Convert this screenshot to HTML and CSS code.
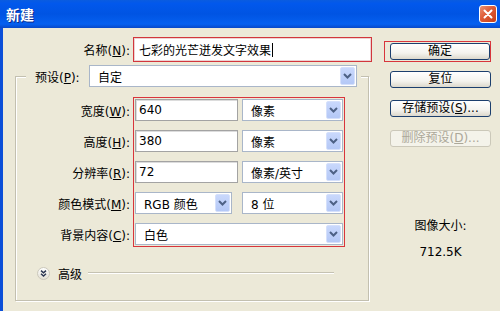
FILE: index.html
```html
<!DOCTYPE html>
<html lang="zh-CN">
<head>
<meta charset="utf-8">
<title>新建</title>
<link rel="stylesheet" href="styles.css">
</head>
<body>
<div class="window">
  <div class="titlebar">
    <span class="title">新建</span>
    <span class="close"><svg width="10" height="10" viewBox="0 0 10 10"><path d="M1.5 1.5 L8.5 8.5 M8.5 1.5 L1.5 8.5" stroke="#fff" stroke-width="2" stroke-linecap="round"/></svg></span>
  </div>
  <div class="client">
    <div class="main">
      <div class="name-row">
        <span class="lbl name-lbl">名称(<u>N</u>):</span>
        <div class="name-frame">七彩的光芒迸发文字效果<span class="caret"></span></div>
      </div>
      <fieldset class="group">
        <legend class="preset">
          <span class="preset-lbl">预设(<u>P</u>):</span>
          <div class="combo preset-combo"><span class="combo-text">自定</span><span class="drop"><svg width="9" height="6" viewBox="0 0 9 6"><path d="M1 1 L4.5 4.5 L8 1" fill="none" stroke="#4d6185" stroke-width="2"/></svg></span></div>
        </legend>
        <div class="params">
          <div class="labels">
            <span>宽度(<u>W</u>):</span>
            <span>高度(<u>H</u>):</span>
            <span>分辨率(<u>R</u>):</span>
            <span>颜色模式(<u>M</u>):</span>
            <span>背景内容(<u>C</u>):</span>
          </div>
          <div class="fields">
            <div class="textbox">640</div>
            <div class="combo"><span class="combo-text">像素</span><span class="drop"><svg width="9" height="6" viewBox="0 0 9 6"><path d="M1 1 L4.5 4.5 L8 1" fill="none" stroke="#4d6185" stroke-width="2"/></svg></span></div>
            <div class="textbox">380</div>
            <div class="combo"><span class="combo-text">像素</span><span class="drop"><svg width="9" height="6" viewBox="0 0 9 6"><path d="M1 1 L4.5 4.5 L8 1" fill="none" stroke="#4d6185" stroke-width="2"/></svg></span></div>
            <div class="textbox">72</div>
            <div class="combo"><span class="combo-text">像素/英寸</span><span class="drop"><svg width="9" height="6" viewBox="0 0 9 6"><path d="M1 1 L4.5 4.5 L8 1" fill="none" stroke="#4d6185" stroke-width="2"/></svg></span></div>
            <div class="combo narrow"><span class="combo-text">RGB 颜色</span><span class="drop"><svg width="9" height="6" viewBox="0 0 9 6"><path d="M1 1 L4.5 4.5 L8 1" fill="none" stroke="#4d6185" stroke-width="2"/></svg></span></div>
            <div class="combo"><span class="combo-text">8 位</span><span class="drop"><svg width="9" height="6" viewBox="0 0 9 6"><path d="M1 1 L4.5 4.5 L8 1" fill="none" stroke="#4d6185" stroke-width="2"/></svg></span></div>
            <div class="combo wide"><span class="combo-text">白色</span><span class="drop"><svg width="9" height="6" viewBox="0 0 9 6"><path d="M1 1 L4.5 4.5 L8 1" fill="none" stroke="#4d6185" stroke-width="2"/></svg></span></div>
          </div>
        </div>
        <div class="advanced">
          <svg class="adv-icon" width="13" height="13" viewBox="0 0 13 13">
            <defs><linearGradient id="ag" x1="0" y1="0" x2="0" y2="1"><stop offset="0" stop-color="#ffffff"/><stop offset="1" stop-color="#e2dfd4"/></linearGradient></defs>
            <circle cx="6.5" cy="6.5" r="6" fill="url(#ag)" stroke="#cbc8bb"/>
            <path d="M4 3.6 L6.5 5.8 L9 3.6 M4 6.8 L6.5 9 L9 6.8" fill="none" stroke="#2a3552" stroke-width="1.4"/>
          </svg>
          <span class="adv-text">高级</span>
          <span class="rule"></span>
        </div>
      </fieldset>
    </div>
    <div class="side">
      <div class="ok-frame"><button class="btn">确定</button></div>
      <button class="btn reset">复位</button>
      <button class="btn save">存储预设(<u>S</u>)...</button>
      <button class="btn del" disabled>删除预设(<u>D</u>)...</button>
      <div class="size-label">图像大小:</div>
      <div class="size-value">712.5K</div>
    </div>
  </div>
</div>
</body>
</html>
```
FILE: styles.css
```css
html, body {
  margin: 0;
  padding: 0;
}
body {
  width: 500px;
  height: 311px;
  overflow: hidden;
  background: #ece9d8;
  font-family: "DejaVu Sans", "Noto Sans CJK SC", sans-serif;
  font-size: 12px;
  color: #000;
}
.window {
  width: 500px;
  height: 311px;
  display: flex;
  flex-direction: column;
}
.titlebar {
  height: 28px;
  flex: none;
  box-sizing: border-box;
  display: flex;
  align-items: center;
  justify-content: space-between;
  padding: 0 3px 0 6px;
  background: linear-gradient(180deg, #0a5ce0 0%, #0258ec 12%, #0054e3 50%, #0560f0 86%, #0848c8 100%);
}
.title {
  color: #fff;
  font-weight: bold;
  font-size: 14px;
  font-family: "Noto Sans CJK SC", sans-serif;
  text-shadow: 1px 1px 0 #0c2a8c;
}
.close {
  width: 18px;
  height: 18px;
  box-sizing: border-box;
  border: 1px solid #fff;
  border-radius: 3px;
  background: linear-gradient(135deg, #eb9274 0%, #de5a36 45%, #c53f18 100%);
  display: flex;
  align-items: center;
  justify-content: center;
}
.client {
  flex: 1;
  display: flex;
  border-left: 3px solid #0b4fd8;
}
.main {
  width: 369px;
  padding-top: 9px;
}
.name-row {
  display: flex;
  align-items: center;
  gap: 3px;
  height: 25px;
}
.name-lbl {
  width: 127px;
  text-align: right;
}
.name-frame {
  width: 239px;
  height: 25px;
  box-sizing: border-box;
  border: 1px solid #d2363c;
  background: #fff;
  box-shadow: inset 0 0 0 1px #ecd2d2;
  padding-left: 5px;
  display: flex;
  align-items: center;
  font-family: "Noto Sans CJK SC", sans-serif;
}
.caret {
  display: inline-block;
  width: 1px;
  height: 14px;
  background: #000;
  margin-left: 1px;
}
.group {
  margin: 3px 0 0 12px;
  width: 354px;
  box-sizing: border-box;
  min-width: 0;
  border: 1px solid #c3c0b0;
  box-shadow: 1px 1px 0 #fff, inset 1px 1px 0 #fff;
  padding: 10px 0 20px 0;
}
.preset {
  margin-left: 10px;
  padding: 0 4px 0 9px;
  display: flex;
  align-items: center;
  gap: 4px;
  background: #ece9d8;
}
.preset-lbl {
  width: 50px;
}
.preset-combo {
  width: 268px;
}
.params {
  display: flex;
  gap: 3px;
}
.labels {
  width: 114px;
  display: grid;
  grid-auto-rows: 22px;
  row-gap: 9px;
  padding: 2px 0;
  align-items: center;
  text-align: right;
}
.fields {
  border: 1px solid #d8353c;
  padding: 1px;
  display: grid;
  grid-template-columns: 103px 101px;
  column-gap: 4px;
  grid-auto-rows: 22px;
  row-gap: 9px;
}
.textbox {
  box-sizing: border-box;
  height: 22px;
  border: 1px solid #a3a3a3;
  box-shadow: inset 1px 1px 0 #dcdcdc;
  background: #fff;
  padding-left: 3px;
  display: flex;
  align-items: center;
}
.combo {
  box-sizing: border-box;
  height: 22px;
  border: 1px solid #a9b6c9;
  background: #fff;
  padding: 1px;
  display: flex;
  align-items: center;
}
.combo-text {
  flex: 1;
  padding-left: 7px;
  white-space: nowrap;
}
.drop {
  width: 15px;
  height: 100%;
  box-sizing: border-box;
  border: 1px solid #d5e0fb;
  border-radius: 2px;
  background: linear-gradient(180deg, #c9d8fc 0%, #b4c8f6 100%);
  display: flex;
  align-items: center;
  justify-content: center;
}
.narrow {
  width: 97px;
}
.wide {
  grid-column: 1 / -1;
}
.advanced {
  display: flex;
  align-items: center;
  height: 14px;
  margin: 19px 34px 0 21px;
}
.adv-icon {
  flex: none;
}
.adv-text {
  margin-left: 8px;
  margin-right: 6px;
}
.rule {
  flex: 1;
  height: 0;
  border-top: 1px solid #c5c2b2;
  border-bottom: 1px solid #fff;
}
.side {
  margin-left: 18px;
  width: 101px;
  padding-top: 13px;
  display: flex;
  flex-direction: column;
}
.ok-frame {
  margin-left: -6px;
  border: 1px solid #d8353c;
  padding: 1px 0 1px 5px;
}
.btn {
  display: block;
  width: 101px;
  height: 17px;
  box-sizing: border-box;
  margin: 0;
  padding: 0;
  font: inherit;
  color: #000;
  line-height: 15px;
  text-align: center;
  border: 1px solid #1c3f6e;
  border-radius: 3px;
  background: linear-gradient(180deg, #ffffff 0%, #f4f3ee 60%, #dcd8cc 100%);
}
.ok-frame .btn {
  width: 100px;
}
.reset {
  margin-top: 9px;
}
.save {
  margin-top: 12px;
}
.del {
  margin-top: 13px;
  color: #aca899;
  border-color: #cbc8b9;
  background: #f4f3ea;
}
.size-label {
  margin-top: 71px;
  line-height: 16px;
  text-align: center;
}
.size-value {
  margin-top: 10px;
  line-height: 16px;
  text-align: center;
}
```
